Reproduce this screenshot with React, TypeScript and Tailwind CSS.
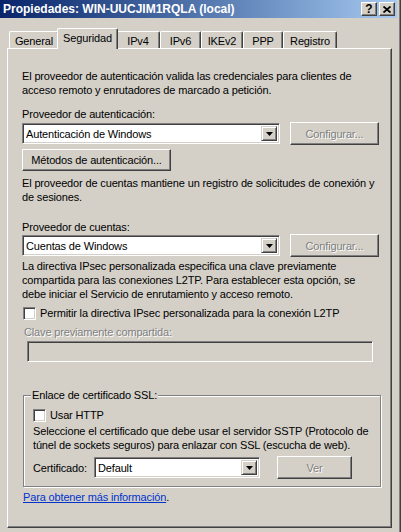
import type { ReactNode } from "react";

const raised =
  "bg-[#d4d0c8] border border-t-white border-l-white border-r-[#404040] border-b-[#404040] shadow-[inset_-1px_-1px_0_#808080]";
const sunken =
  "border border-t-[#808080] border-l-[#808080] border-r-white border-b-white shadow-[inset_1px_1px_0_#404040,inset_-1px_-1px_0_#d4d0c8]";
const disabledText = "text-[#808080] [text-shadow:1px_1px_0_#ffffff]";

function Button({
  children,
  disabled,
  className = "",
}: {
  children: ReactNode;
  disabled?: boolean;
  className?: string;
}) {
  return (
    <div className={`flex items-center justify-center whitespace-nowrap ${raised} ${className}`}>
      <span className={disabled ? disabledText : ""}>{children}</span>
    </div>
  );
}

function Combo({ value, className = "" }: { value: string; className?: string }) {
  return (
    <div className={`flex h-[21px] bg-white p-[2px] ${sunken} ${className}`}>
      <div className="flex-1 flex items-center pl-[1px] whitespace-nowrap overflow-hidden">{value}</div>
      <div className="w-[16px] h-full flex items-center justify-center bg-[#d4d0c8] border border-t-[#d4d0c8] border-l-[#d4d0c8] border-r-[#404040] border-b-[#404040] shadow-[inset_1px_1px_0_#ffffff,inset_-1px_-1px_0_#808080]">
        <svg width="7" height="4" viewBox="0 0 7 4">
          <path d="M0 0h7L3.5 4z" fill="#000" />
        </svg>
      </div>
    </div>
  );
}

function Checkbox({ label, className = "" }: { label: string; className?: string }) {
  return (
    <div className={`flex items-center gap-[4px] h-[14px] ${className}`}>
      <div className={`w-[13px] h-[13px] bg-white ${sunken}`} />
      <span className="whitespace-nowrap">{label}</span>
    </div>
  );
}

function TitleBar() {
  return (
    <div className="flex items-center justify-between h-[18px] pl-[3px] pr-[2px] bg-linear-to-r from-[#0a246a] to-[#a6caf0]">
      <span className="text-white font-bold text-[12px] tracking-normal whitespace-nowrap">
        Propiedades: WIN-UUCJIM1RQLA (local)
      </span>
      <div className="flex gap-[2px]">
        <div className={`w-[16px] h-[14px] flex items-center justify-center ${raised}`}>
          <span className="font-bold text-[12px] leading-none tracking-normal">?</span>
        </div>
        <div className={`w-[16px] h-[14px] flex items-center justify-center ${raised}`}>
          <svg width="8" height="7" viewBox="0 0 8 7">
            <path d="M0.5 0.5L7.5 6.5M7.5 0.5L0.5 6.5" stroke="#000" strokeWidth="1.8" />
          </svg>
        </div>
      </div>
    </div>
  );
}

const tabs = [
  { label: "General", w: "w-[50px]" },
  { label: "Seguridad", w: "w-[61px]", active: true },
  { label: "IPv4", w: "w-[44px]" },
  { label: "IPv6", w: "w-[41px]" },
  { label: "IKEv2", w: "w-[42px]" },
  { label: "PPP", w: "w-[40px]" },
  { label: "Registro", w: "w-[54px]" },
];

function Tabs() {
  return (
    <div className="flex items-end h-[20px] mt-[10px] pl-[9px] relative z-10">
      {tabs.map((t) =>
        t.active ? (
          <div
            key={t.label}
            className={`${t.w} h-[21px] -mx-[2px] -mb-[1px] relative z-10 flex items-start justify-center pt-[2px] bg-[#d4d0c8] border-t border-l border-white border-r border-r-[#404040] shadow-[inset_-1px_0_0_#808080] rounded-t-[2px]`}
          >
            {t.label}
          </div>
        ) : (
          <div
            key={t.label}
            className={`${t.w} h-[17px] flex items-start justify-center pt-[2px] bg-[#d4d0c8] border-t border-l border-white border-r border-r-[#404040] shadow-[inset_-1px_0_0_#808080] rounded-t-[2px]`}
          >
            {t.label}
          </div>
        )
      )}
    </div>
  );
}

function Panel() {
  return (
    <div
      className={`ml-[7px] w-[385px] h-[480px] flex flex-col pl-[14px] pt-[20px] ${raised}`}
    >
      <p className="whitespace-nowrap">
        El proveedor de autenticación valida las credenciales para clientes de
        <br />
        acceso remoto y enrutadores de marcado a petición.
      </p>

      <p className="mt-[10px]">Proveedor de autenticación:</p>
      <div className="flex items-start mt-[1px]">
        <Combo value="Autenticación de Windows" className="mt-[1px] w-[258px]" />
        <Button disabled className="ml-[10px] w-[89px] h-[23px]">
          Configurar...
        </Button>
      </div>
      <Button className="mt-[4px] w-[149px] h-[22px]">Métodos de autenticación...</Button>

      <p className="mt-[5px] whitespace-nowrap">
        El proveedor de cuentas mantiene un registro de solicitudes de conexión y
        <br />
        de sesiones.
      </p>

      <p className="mt-[16px]">Proveedor de cuentas:</p>
      <div className="flex items-start">
        <Combo value="Cuentas de Windows" className="mt-[1px] w-[258px]" />
        <Button disabled className="ml-[10px] w-[89px] h-[23px]">
          Configurar...
        </Button>
      </div>

      <p className="mt-[2px] whitespace-nowrap">
        La directiva IPsec personalizada especifica una clave previamente
        <br />
        compartida para las conexiones L2TP. Para establecer esta opción, se
        <br />
        debe iniciar el Servicio de enrutamiento y acceso remoto.
      </p>

      <Checkbox
        className="mt-[5px] ml-[1px]"
        label="Permitir la directiva IPsec personalizada para la conexión L2TP"
      />

      <p className={`mt-[5px] ml-[2px] ${disabledText}`}>Clave previamente compartida:</p>
      <div className={`mt-[2px] ml-[5px] w-[346px] h-[21px] bg-[#d4d0c8] ${sunken}`} />

      <div className="mt-[33px] ml-[1px] w-[358px] flex flex-col pl-[9px] pb-[7px] border border-[#808080] shadow-[1px_1px_0_#ffffff,inset_1px_1px_0_#ffffff]">
        <span className="-mt-[8px] -ml-[2px] self-start px-[1px] bg-[#d4d0c8] whitespace-nowrap">
          Enlace de certificado SSL:
        </span>
        <Checkbox className="mt-[6px]" label="Usar HTTP" />
        <p className="mt-[2px] whitespace-nowrap">
          Seleccione el certificado que debe usar el servidor SSTP (Protocolo de
          <br />
          túnel de sockets seguros) para enlazar con SSL (escucha de web).
        </p>
        <div className="flex items-start mt-[4px]">
          <span className="w-[61px] mt-[5px]">Certificado:</span>
          <Combo value="Default" className="mt-[1px] w-[166px]" />
          <Button disabled className="ml-[17px] w-[75px] h-[23px]">
            Ver
          </Button>
        </div>
      </div>

      <p className="mt-[3px] ml-[1px] whitespace-nowrap">
        <a className="text-[#0033cc] underline">Para obtener más información</a>.
      </p>
    </div>
  );
}

export default function App() {
  return (
    <div className="flex w-[401px] h-[532px] overflow-hidden bg-[#d4d0c8] font-['Liberation_Sans',Arial,sans-serif] text-[11px] leading-[14px] tracking-[-0.15px] text-black">
      <div className="flex flex-col w-[397px]">
        <TitleBar />
        <Tabs />
        <Panel />
      </div>
      <div className="w-[4px] h-full bg-[#d4d0c8] border-r border-r-[#404040] shadow-[inset_-1px_0_0_#808080]" />
    </div>
  );
}
